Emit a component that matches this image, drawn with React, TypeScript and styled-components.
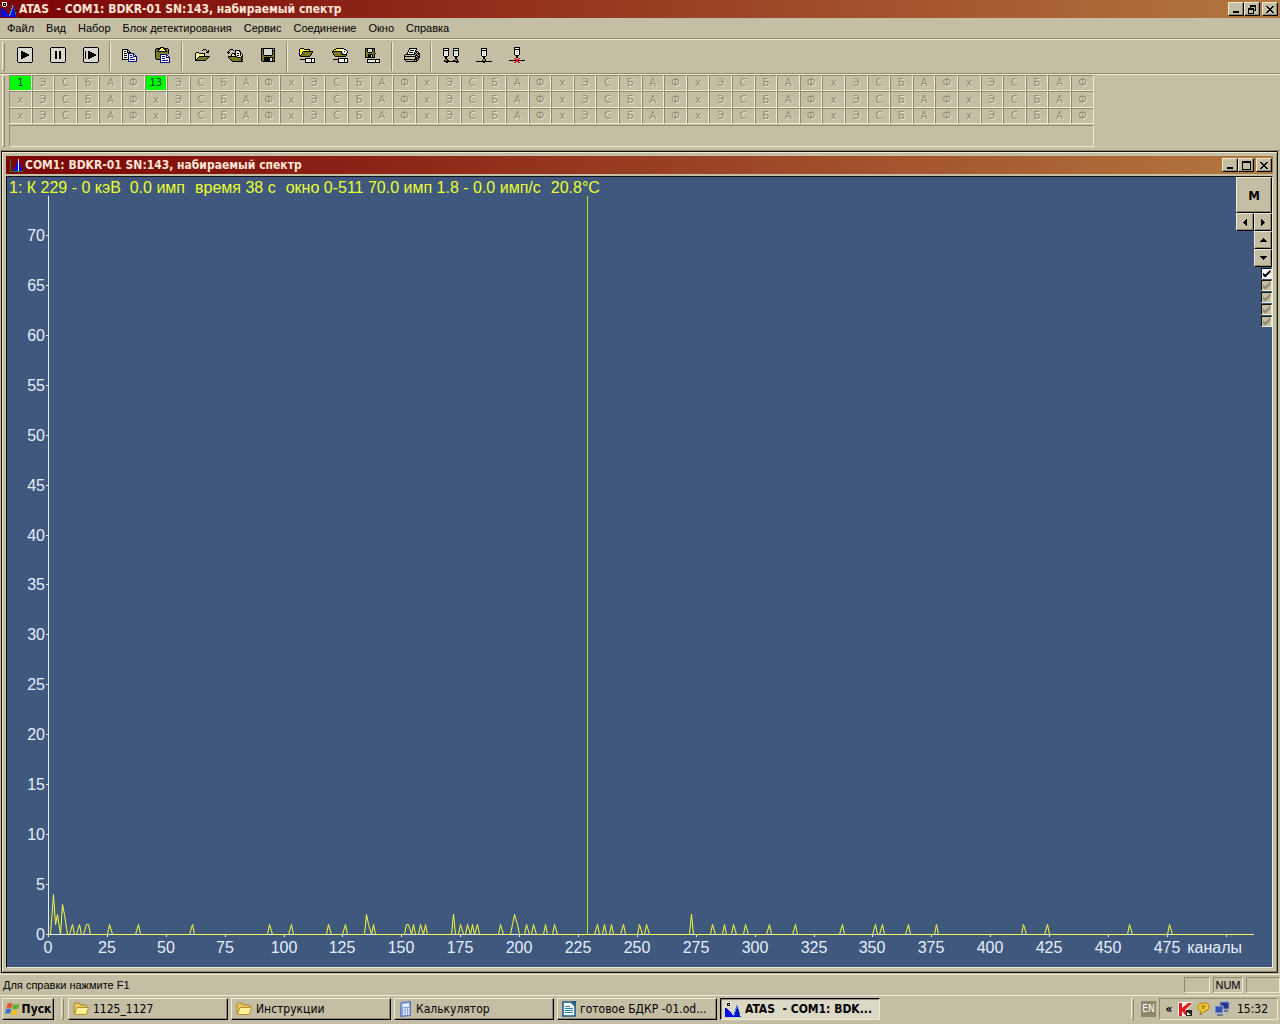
import React, { useLayoutEffect, useRef, useState } from 'react';
import styled, { createGlobalStyle, css } from 'styled-components';

const face = '#c4bea4';
const light = '#efead2';
const shade = '#8f8a6e';
const ui = '"Liberation Sans", Arial, sans-serif';
const tahoma = '"DejaVu Sans Condensed", "DejaVu Sans", sans-serif';

const Global = createGlobalStyle`
  * { box-sizing: border-box; }
  body { margin: 0; background: ${face}; font-family: ${ui}; font-size: 11px; color: #000; }
  button { font: inherit; color: inherit; padding: 0; margin: 0; border: 0; background: none; }
`;

const raised = css`
  background: ${face};
  border: 1px solid;
  border-color: ${light} #000 #000 ${light};
  box-shadow: inset -1px -1px 0 ${shade};
`;
const sunken = css`
  border: 1px solid;
  border-color: ${shade} ${light} ${light} ${shade};
`;

const Desktop = styled.div`
  min-height: 100vh;
  display: flex;
  flex-direction: column;
`;

const TitleBar = styled.header<{ $child?: boolean }>`
  height: 18px;
  flex: none;
  display: flex;
  align-items: center;
  gap: 2px;
  padding: 0 ${p => (p.$child ? '1px 0 4px' : '2px 0 1px')};
  background: linear-gradient(90deg, #7c0306, #b4773f);
  color: #fbe6d6;
`;
const TitleText = styled.h1`
  flex: 1;
  min-width: 0;
  margin: 0;
  font: 700 12px/18px ${tahoma};
  white-space: pre;
  overflow: hidden;
`;
const WindowButtons = styled.div`
  display: flex;
`;
const CaptionButton = styled.button<{ $gap?: boolean }>`
  ${raised}
  width: 16px;
  height: 14px;
  margin-left: ${p => (p.$gap ? 2 : 0)}px;
  display: grid;
  place-items: center;
`;

const MenuBar = styled.nav`
  height: 21px;
  flex: none;
  display: flex;
  align-items: center;
  padding-left: 1px;
  border-bottom: 1px solid ${shade};
`;
const MenuItem = styled.button`
  padding: 0 6px;
  line-height: 18px;
`;

const Band = styled.div<{ $last?: boolean }>`
  flex: none;
  display: flex;
  padding: 2px 0 ${p => (p.$last ? 3 : 2)}px 2px;
  border-top: 1px solid ${light};
  border-bottom: ${p => (p.$last ? 0 : 1)}px solid ${shade};
`;
const Grip = styled.div`
  width: 3px;
  flex: none;
  border: 1px solid;
  border-color: ${light} ${shade} ${shade} ${light};
`;
const Tools = styled.div`
  display: flex;
  height: 29px;
  padding-left: 3px;
`;
const ToolButton = styled.button`
  width: 33px;
  display: grid;
  place-items: center;
  padding-bottom: 3px;
`;
const ToolSeparator = styled.div`
  width: 2px;
  margin: 0 2px;
  border-left: 1px solid ${shade};
  border-right: 1px solid ${light};
`;

const DetectorBand = styled(Band)`
  padding-top: 0;
`;
const Detectors = styled.div`
  width: 1085px;
  margin-left: 4px;
`;
const DetectorTable = styled.table`
  width: 100%;
  table-layout: fixed;
  border-collapse: separate;
  border-spacing: 0 0;
`;
const DetectorRow = styled.tr`
  height: 16px;
  &:nth-child(2) { height: 17px; }
`;
const Cell = styled.td<{ $on: boolean }>`
  ${sunken}
  padding: 0;
  text-align: center;
  font: 11px/14px ${tahoma};
  color: ${p => (p.$on ? '#043' : '#8f8a70')};
  text-shadow: ${p => (p.$on ? 'none' : '1px 1px 0 #e6e1ca')};
  background: ${p => (p.$on ? '#00fb08' : 'transparent')};
`;
const DetectorNote = styled.div`
  ${sunken}
  height: 22px;
  margin-top: 1px;
`;

const Workspace = styled.main`
  flex: 1;
  display: flex;
  padding: 0 2px 1px 1px;
  border-top: 1px solid ${shade};
`;
const ChildWindow = styled.section`
  flex: 1;
  min-width: 0;
  display: flex;
  flex-direction: column;
  padding: 4px;
  border: 1px solid #111;
  box-shadow: inset 1px 1px 0 ${light}, inset -1px -1px 0 ${shade};
`;
const Canvas = styled.div`
  position: relative;
  flex: 1;
  min-height: 300px;
  margin-top: 2px;
  border: 1px solid;
  border-color: #111 ${light} ${light} #111;
  background: #40587e;
  overflow: hidden;
`;
const Readout = styled.div`
  display: flex;
  gap: 10px;
  padding: 1px 2px;
  font: 16px/19px ${ui};
  color: #eaff2e;
  white-space: pre;
`;
const Plot = styled.svg`
  position: absolute;
  inset: 0;
  width: 100%;
  height: 100%;
  font: 16px ${ui};
`;
const Controls = styled.div`
  position: absolute;
  top: 0;
  right: 0;
  width: 36px;
  display: flex;
  flex-direction: column;
  align-items: flex-end;
`;
const ArrowPair = styled.div`
  display: flex;
`;
const ModeButton = styled.button`
  ${raised}
  width: 36px;
  height: 36px;
  font: 700 13px ${tahoma};
`;
const ArrowButton = styled.button`
  ${raised}
  width: 18px;
  height: 18px;
  display: grid;
  place-items: center;
`;
const Checks = styled.div`
  display: flex;
  flex-direction: column;
  gap: 1px;
  margin-top: 1px;
`;
const Check = styled.input`
  appearance: none;
  width: 11px;
  height: 11px;
  margin: 0;
  display: grid;
  place-items: center;
  background: #fff;
  border: 1px solid;
  border-color: #111 ${light} ${light} #111;
  &::before {
    content: '';
    width: 8px;
    height: 8px;
    background: #000;
    clip-path: polygon(0 35%, 35% 62%, 100% 0, 100% 35%, 35% 100%, 0 68%);
  }
  &:disabled { background: ${face}; }
  &:disabled::before { background: ${shade}; }
`;

const StatusBar = styled.footer`
  flex: none;
  height: 21px;
  display: flex;
  align-items: center;
  gap: 3px;
  padding-left: 3px;
  border-top: 1px solid ${light};
`;
const StatusText = styled.span`
  flex: 1;
`;
const StatusField = styled.span<{ $w: number }>`
  ${sunken}
  width: ${p => p.$w}px;
  height: 16px;
  line-height: 14px;
  text-align: center;
`;

const TaskBar = styled.div`
  flex: none;
  height: 29px;
  display: flex;
  align-items: stretch;
  padding: 2px 2px 4px;
  border-top: 1px solid ${light};
  font: 12px ${tahoma};
`;
const StartButton = styled.button`
  ${raised}
  width: 52px;
  margin-right: 7px;
  display: flex;
  align-items: center;
  justify-content: center;
  gap: 2px;
  font-weight: 700;
`;
const Tasks = styled.div`
  flex: 1;
  min-width: 0;
  display: flex;
  gap: 3px;
  margin-left: 4px;
`;
const Task = styled.button<{ $active?: boolean }>`
  ${raised}
  flex: 0 1 160px;
  min-width: 0;
  display: flex;
  align-items: center;
  gap: 4px;
  padding: 0 2px 0 4px;
  overflow: hidden;
  ${p => p.$active && css`
    font-weight: 700;
    background: #dcd8c6;
    border-color: #000 ${light} ${light} #000;
    box-shadow: inset 1px 1px 0 ${shade};
  `}
`;
const TaskLabel = styled.span`
  min-width: 0;
  overflow: hidden;
  white-space: pre;
`;
const Language = styled.span`
  width: 15px;
  height: 16px;
  margin: 3px 3px 0 7px;
  background: #8d886b;
  color: #fff;
  font-size: 10px;
  line-height: 16px;
  text-align: center;
`;
const Tray = styled.div`
  ${sunken}
  width: 119px;
  display: flex;
  align-items: center;
  gap: 4px;
  padding: 0 9px 0 4px;
`;
const Chevron = styled.button`
  font-weight: 700;
  width: 10px;
`;
const Clock = styled.time`
  margin-left: auto;
`;

const palette: Record<string, string> = {
  k: '#000', w: '#f4f4ec', y: '#ffff3a', o: '#7d7a1c', g: '#8c8c80', n: '#101080',
  b: '#0010e0', r: '#e81818', e: '#208030', l: '#d8d8cc', c: '#5a8ad8', p: '#f6f49a',
};

function Bitmap({ rows }: { rows: string[] }) {
  const width = Math.max(...rows.map(r => r.length));
  const dots: React.ReactNode[] = [];
  rows.forEach((row, y) => {
    let x = 0;
    while (x < row.length) {
      let end = x + 1;
      while (end < row.length && row[end] === row[x]) end++;
      const fill = palette[row[x]];
      if (fill) dots.push(<rect key={`${x}-${y}`} x={x} y={y} width={end - x} height={1} fill={fill} />);
      x = end;
    }
  });
  return (
    <svg width={width} height={rows.length} shapeRendering="crispEdges" aria-hidden="true">
      {dots}
    </svg>
  );
}

const box = (inner: string[]) => [
  '.kkkkkkkkkkkkkk.', 'kllllllllllllllk', 'kllllllllllllllk', 'kllllllllllllllk',
  ...inner.map(r => `kl${r.replace(/\./g, 'l')}lk`),
  'kllllllllllllllk', 'kllllllllllllllk', 'kllllllllllllllk', '.kkkkkkkkkkkkkk.',
];

const art: Record<string, string[]> = {
  play: box(['..kk........', '..kkkk......', '..kkkkkk....', '..kkkkkkkk..', '..kkkkkkkk..', '..kkkkkk....', '..kkkk......', '..kk........']),
  pause: box(['...kk..kk...', '...kk..kk...', '...kk..kk...', '...kk..kk...', '...kk..kk...', '...kk..kk...', '...kk..kk...', '...kk..kk...']),
  step: box(['k..kk.......', 'k..kkkk.....', 'k..kkkkkk...', 'k..kkkkkkkk.', 'k..kkkkkkkk.', 'k..kkkkkk...', 'k..kkkk.....', 'k..kk.......']),
  copy: [
    'kkkkkk..........', 'kwwwwkk.........', 'kwkkwkwk........', 'kwwwwkkkk.......', 'kwkkkwnnnnnn....',
    'kwwwwwnwwwwnn...', 'kwkkkwnwnnwnwn..', 'kwwwwwnwwwwnnnn.', 'kwkkkwnwnnnwwwn.', 'kwwwwwnwwwwwwwn.',
    'kkkkkknwnnnnnwn.', '......nwwwwwwwn.', '......nnnnnnnnn.',
  ],
  paste: [
    '.....kkkk.......', '.kkkkkyykkkkk...', 'kookkyyyykkook..', 'kookwwwwwwkook..', 'kokkkkkkkkkkok..',
    'kooooooooooook..', 'kooooooooooook..', 'koooonnnnnnn....', 'koooonwwwwwnn...', 'koooonwnnnwnwn..',
    'koooonwwwwwnnnn.', 'koooonwnnnwwwwn.', '.kkkknwwwwwwwwn.', '.....nwnnnnnnwn.', '.....nwwwwwwwwn.', '.....nnnnnnnnnn.',
  ],
  open: [
    '.........kkk....', '........k...k.k.', '.............kk.', '..kkk.......kkk.',
    '.kpppkkkkkk.....', '.kppppppppk.....', '.kppppppppk.....', '.kpppkkkkkkkkkkk', '.kppkoooooooook.',
    '.kpkoooooooook..', '.kkoooooooook...', '.kkkkkkkkkkk....',
  ],
  reopen: [
    '...kkk..........', '..k...k.kkkkk...', '.k......kwwwkk..', 'kkk.....kwwwwk..', '.k...kkkkwkkwkk.',
    '....kppkkwwwwkpk', '....kpppkwkkwkpk', '.kkkkkkkkkwwwwkk', '.kooooooookkkkok', '..koooooooooooko',
    '...kooooooooookk', '....koooooooooko', '.....kkkkkkkkkkk',
  ],
  save: [
    'kkkkkkkkkkkkkk', 'kokllllllllkwk', 'kokllllllllkkk', 'kokllllllllkok', 'kokllllllllkok', 'kokllllllllkok',
    'kokllllllllkok', 'kookkkkkkkkook', 'kooooooooooook', 'kookkkkkkkkkok', 'kookkkkkkllkok', 'kookkkkkkllkok',
    'kookkkkkkllkok', '.kkkkkkkkkkkkk',
  ],
  openDevice: [
    '.kkkk...........', 'kyyyykkkkkk.....', 'kyyyyyyyyyk.....', 'kyyykkkkkkkkkk..', 'kyykoooooooook..',
    'kyykooooooook...', 'kykoooooooook...', 'kkoooooooook....', '.kkkkkkkkkk.....', '................',
    '......kkkkkkkkkk', '.kkkkkkwwwwwkwwk', '......kwwwwwkwwk', '......kwwwwwkwwk', '......kkkkkkkkkk',
  ],
  reopenDevice: [
    '....kkkkkkkk....', '..kkyyyyywwwkk..', '.kyyyyyywwwwwwk.', 'kkkkkkkkkkwwkwwk', 'kooooooookwwwwwk',
    '.koooooookkwwwk.', '.kooooooookkkkk.', '..koooooooooook.', '...kkkkkkkkkkk..', '................',
    '......kkkkkkkkkk', '.kkkkkkwwwwwkwwk', '......kwwwwwkwwk', '......kwwwwwkwwk', '......kkkkkkkkkk',
  ],
  saveDevice: [
    'kkkkkkkkkk......', 'kokllllkok......', 'kokllllkok......', 'kokllllkok......', 'kookkkkook......',
    'koooooooook.....', 'kookkkkkok......', 'kookkklkok......', 'kookkklkok......', 'kkkkkkkkkk......',
    '................', '..kkkkkkkkkkkkk.', '..kwwwwwwwkwwwk.', '..kwwwwwwwkwwwk.', '..kkkkkkkkkkkkk.',
  ],
  print: [
    '.....kkkkkkkk...', '.....kwwwwwwk...', '....kwkkkkwk....', '....kwwwwwwkkk..', '...kwkkkkwk.k.k.',
    '...kwwwwwwkk.kkk', '.kkkkkkkkkk.k.kk', 'k..........kkk.k', 'kkkkkkkkkkkk.kkk', 'k..........kk.kk',
    'k......yy..kkkk.', 'kkkkkkkkkkkkk.k.', '.k........k.kk..', '..kkkkkkkkkkk...',
  ],
  probes: [
    'kkkkkk....kkkkkk', 'kwwwwk....kwwwwk', 'kkkkkk....kkkkkk', 'kwllwk....kwllwk', 'kwllwk....kwllwk', 'kwllwk....kwllwk',
    'kwllwk....kwllwk', 'kwwwwk....kwwwwk', '.kkkk......kkkk.', '..kk........kk..', '..kk........kk..', '..ook.......ook.',
    '.kookk....kkook.', '.kkkkkkkkkkkkkkk', '...kk........kk.',
  ],
  probe: [
    '.....kkkkkk.....', '.....kwwwwk.....', '.....kkkkkk.....', '.....kwllwk.....', '.....kwllwk.....', '.....kwllwk.....',
    '.....kwllwk.....', '.....kwwwwk.....', '......kkkk......', '.......kk.......', '.......kk.......', '.......ook......',
    '......kook......', 'kkkkkkkkkkkkkkkk', '.......kk.......',
  ],
  probeOff: [
    '.....kkkkkk.....', '.....kwwwwk.....', '.....kkkkkk.....', '.....kwllwk.....', '.....kwllwk.....', '.....kwllwk.....',
    '.....kwllwk.....', '.....kwwwwk.....', '......kkkk......', '.......kk.......', '.......kk.......', '.....rr..rr.....',
    '......rrrr......', 'kkkkkkkrrkkkkkkk', '......rrrr......', '.....rr..rr.....',
  ],
  atas: [
    '.wwwww..........', '.wkkkw..........', '.wkwkw..........', '.wkkkw.....c....', '..www......cc...', '...........cb...',
    'bb........ccb...', 'bbb.......cbbe..', 'bbbb......cbbe..', 'bbbbb....ccbbb..', 'bbbbbb...cbbbbe.', 'bbbbbbb..cbbbbe.',
    'bbbbbbb.ccbbbbe.', 'bbbbbbbbcbbbbbb.', 'bbbbbbbbbbbbbbbe',
  ],
  spectrum: [
    'e.......w....', 'e.......w....', 'e......bw....', 'e......bwb...', 'e......bwb...', 'e.....bbwb...', 'e.....bbwbb..',
    'e.....bbwbb..', 'e....bbbwbb..', 'e....bbbwbbb.', 'e...bbbbwbbb.', 'e...bbbbwbbb.', 'eeeeeeeeeeeee',
  ],
  min: ['.......', '.......', '.......', '.......', '.......', '.......', 'kkkkkk.', 'kkkkkk.'],
  max: ['kkkkkkkkk', 'kkkkkkkkk', 'k.......k', 'k.......k', 'k.......k', 'k.......k', 'k.......k', 'k.......k', 'kkkkkkkkk'],
  restore: ['..kkkkkk', '..kkkkkk', '..k....k', 'kkkkkk.k', 'kkkkkk.k', 'k....kkk', 'k....k..', 'k....k..', 'kkkkkk..'],
  close: ['kk....kk', '.kk..kk.', '..kkkk..', '...kk...', '..kkkk..', '.kk..kk.', 'kk....kk'],
  left: ['...k', '..kk', '.kkk', 'kkkk', '.kkk', '..kk', '...k'],
  right: ['k...', 'kk..', 'kkk.', 'kkkk', 'kkk.', 'kk..', 'k...'],
  up: ['...k...', '..kkk..', '.kkkkk.', 'kkkkkkk'],
  down: ['kkkkkkk', '.kkkkk.', '..kkk..', '...k...'],
};

const FolderIcon = () => (
  <svg width="16" height="14" viewBox="0 0 16 14" aria-hidden="true">
    <path d="M1 12V2l1-1h4l2 2h5l1 1v2" fill="#e8c860" stroke="#a88420" />
    <path d="M1.5 12.5 4 5.5h11.5l-2 7z" fill="#fff09a" stroke="#b8922c" />
  </svg>
);
const CalculatorIcon = () => (
  <svg width="13" height="16" viewBox="0 0 13 16" aria-hidden="true">
    <path d="M2 1.5 11.5.5v14l-10 1z" fill="#8fa8e0" stroke="#5a70b8" />
    <path d="M3.500 3 10 2.500v3L3.500 6z" fill="#e8f2ff" />
    <path d="M4 8h1.500M6.500 8H8M9 8h1.500M4 10.500h1.500M6.500 10.500H8M9 10.500h1.500M4 13h1.500M6.500 13H8M9 13h1.500" stroke="#fff" strokeWidth="1.500" />
  </svg>
);
const WriterIcon = () => (
  <svg width="14" height="16" viewBox="0 0 14 16" aria-hidden="true">
    <path d="M1 1h8l4 4v10H1z" fill="#f4fbff" stroke="#1a5a86" strokeWidth="1.500" />
    <path d="M9 0h5v5z" fill="#1a5a86" />
    <path d="M3 5.500h5M3 7.500h8M3 9.500h8M3 11.500h8" stroke="#2d84b4" />
  </svg>
);
const WindowsLogo = () => (
  <svg width="15" height="14" viewBox="0 0 15 14" aria-hidden="true">
    <path d="M2.500 2Q5 .2 7.500 1.700L6.400 6.300Q4 5 1.400 6.500z" fill="#e8562a" />
    <path d="M8.300 2.100Q11 3.500 14.500 1.800L13.200 6.500Q10 8 7.200 6.700z" fill="#5cb030" />
    <path d="M1.200 7.300Q4 6 6.200 7.200L5.100 11.800Q3 10.500.1 12z" fill="#3a70d8" />
    <path d="M7 7.600Q10 9 13 7.400L11.800 12Q9 13.700 5.900 12.200z" fill="#f4bc20" />
  </svg>
);
const AntivirusIcon = () => (
  <svg width="15" height="15" viewBox="0 0 15 15" aria-hidden="true">
    <path d="M0 0h15L9 7l5 7H0z" fill="#fff4f0" />
    <path d="M1 1h3v5l6-5h4L7 8l3 5H7L4 9v5H1z" fill="#e01c1c" />
    <path d="M8 8h6v6H8z" fill="#222" />
    <path d="M9 13V10l4 3z" fill="#fff" />
  </svg>
);
const BubbleIcon = () => (
  <svg width="13" height="14" viewBox="0 0 13 14" aria-hidden="true">
    <path d="M5 1h4q4 1 3 4 0 3-4 4L3 13l1-4Q0 8 1 4q1-3 4-3z" fill="#f8cc38" stroke="#a87c10" />
    <path d="M4 4h5M4 6h4" stroke="#8a6408" />
  </svg>
);
const NetworkIcon = () => (
  <svg width="16" height="16" viewBox="0 0 16 16" aria-hidden="true">
    <path d="M6 1h9v7H6z" fill="#27358c" stroke="#8d9ad0" />
    <path d="M1 5h8v7H1z" fill="#3550b0" stroke="#a9b4dc" />
    <path d="M3 14h6M10 10h4" stroke="#6d7498" strokeWidth="2" />
  </svg>
);

const singles = [
  10, 13, 16, 17, 26, 38, 61, 94, 103, 119, 126, 138, 152, 153, 155, 158, 160, 175, 178, 180, 182, 192,
  203, 206, 211, 215, 233, 236, 239, 244, 251, 254, 282, 287, 291, 296, 306, 317, 337, 351, 354, 365, 377,
  414, 424, 459, 476,
];
const counts = new Array<number>(512).fill(0);
singles.forEach(ch => { counts[ch] = 1; });
Object.entries({ 2: 4, 3: 1, 4: 2, 6: 3, 7: 2, 135: 2, 136: 1, 172: 2, 197: 1, 198: 2, 199: 1, 273: 2 })
  .forEach(([ch, n]) => { counts[Number(ch)] = n; });

const cursorChannel = 229;
const maxCount = 73.9;

function Spectrum() {
  const ref = useRef<SVGSVGElement>(null);
  const [size, setSize] = useState({ w: 1265, h: 791 });
  useLayoutEffect(() => {
    const el = ref.current;
    if (!el) return;
    const measure = () => {
      const r = el.getBoundingClientRect();
      setSize({ w: r.width, h: r.height });
    };
    measure();
    const observer = new ResizeObserver(measure);
    observer.observe(el);
    return () => observer.disconnect();
  }, []);

  const left = 41;
  const top = 19;
  const right = size.w - 18;
  const base = size.h - 33;
  const px = (ch: number) => Math.round(left + (ch * (right - left)) / 512);
  const py = (n: number) => Math.round(base - (n * (base - top)) / maxCount);
  const line = counts.map((n, ch) => `${px(ch) + 0.5},${py(n) + 0.5}`).join(' ');
  const yTicks = Array.from({ length: 15 }, (_, i) => i * 5);
  const xTicks = Array.from({ length: 21 }, (_, i) => i * 25);

  return (
    <Plot ref={ref} role="img" aria-label="Спектр">
      <g fill="#e4eefa">
        <rect x={left} y={top} width={1} height={base - top + 1} />
        <rect x={left} y={base} width={right - left} height={1} />
        {yTicks.map(n => (
          <g key={n}>
            <rect x={left - 2} y={py(n)} width={2} height={1} />
            <text x={left - 3} y={py(n) + 6} textAnchor="end">{n}</text>
          </g>
        ))}
        {xTicks.map(ch => (
          <g key={ch}>
            <rect x={px(ch)} y={base + 1} width={1} height={2} />
            {ch < 500 && <text x={px(ch)} y={base + 19} textAnchor="middle">{ch}</text>}
          </g>
        ))}
        <text x={right - 12} y={base + 19} textAnchor="end">каналы</text>
      </g>
      <polyline points={line} fill="none" stroke="#f4ff38" strokeWidth={1} />
      <rect x={px(cursorChannel)} y={top} width={1} height={base - top} fill="#9cf01c" />
    </Plot>
  );
}

const menus = ['Файл', 'Вид', 'Набор', 'Блок детектирования', 'Сервис', 'Соединение', 'Окно', 'Справка'];
const toolGroups: [string, string][][] = [
  [['play', 'Пуск'], ['pause', 'Пауза'], ['step', 'Продолжить']],
  [['copy', 'Копировать'], ['paste', 'Вставить']],
  [['open', 'Открыть'], ['reopen', 'Загрузить'], ['save', 'Сохранить']],
  [['openDevice', 'Открыть в блок'], ['reopenDevice', 'Загрузить в блок'], ['saveDevice', 'Сохранить из блока']],
  [['print', 'Печать']],
  [['probes', 'Все блоки'], ['probe', 'Подключить'], ['probeOff', 'Отключить']],
];
const letters = ['х', 'Э', 'С', 'Б', 'А', 'Ф'];
const cellText = (row: number, col: number) => {
  if (row === 0 && col === 0) return '1';
  if (row === 0 && col === 6) return '13';
  return letters[col % 6];
};
const readings = [
  '1: К 229 - 0 кэВ  0.0 имп',
  'время 38 с',
  'окно 0-511 70.0 имп 1.8 - 0.0 имп/с',
  '20.8°C',
];

function Caption({ middle, label }: { middle: string; label: string }) {
  return (
    <WindowButtons>
      <CaptionButton aria-label="Свернуть"><Bitmap rows={art.min} /></CaptionButton>
      <CaptionButton aria-label={label}><Bitmap rows={art[middle]} /></CaptionButton>
      <CaptionButton $gap aria-label="Закрыть"><Bitmap rows={art.close} /></CaptionButton>
    </WindowButtons>
  );
}

export default function App() {
  return (
    <Desktop>
      <Global />
      <TitleBar>
        <Bitmap rows={art.atas} />
        <TitleText>{'ATAS  - COM1: BDKR-01 SN:143, набираемый спектр'}</TitleText>
        <Caption middle="restore" label="Восстановить" />
      </TitleBar>
      <MenuBar>
        {menus.map(m => <MenuItem key={m}>{m}</MenuItem>)}
      </MenuBar>
      <Band>
        <Grip />
        <Tools>
          {toolGroups.map((group, i) => (
            <React.Fragment key={i}>
              {i > 0 && <ToolSeparator />}
              {group.map(([icon, label]) => (
                <ToolButton key={icon} aria-label={label}><Bitmap rows={art[icon]} /></ToolButton>
              ))}
            </React.Fragment>
          ))}
        </Tools>
      </Band>
      <DetectorBand $last>
        <Grip />
        <Detectors>
          <DetectorTable>
            <tbody>
              {[0, 1, 2].map(row => (
                <DetectorRow key={row}>
                  {Array.from({ length: 48 }, (_, col) => (
                    <Cell key={col} $on={row === 0 && (col === 0 || col === 6)}>{cellText(row, col)}</Cell>
                  ))}
                </DetectorRow>
              ))}
            </tbody>
          </DetectorTable>
          <DetectorNote />
        </Detectors>
      </DetectorBand>
      <Workspace>
        <ChildWindow>
          <TitleBar $child>
            <Bitmap rows={art.spectrum} />
            <TitleText as="h2">COM1: BDKR-01 SN:143, набираемый спектр</TitleText>
            <Caption middle="max" label="Развернуть" />
          </TitleBar>
          <Canvas>
            <Spectrum />
            <Readout>{readings.map(r => <span key={r}>{r}</span>)}</Readout>
            <Controls>
              <ModeButton>M</ModeButton>
              <ArrowPair>
                <ArrowButton aria-label="Влево"><Bitmap rows={art.left} /></ArrowButton>
                <ArrowButton aria-label="Вправо"><Bitmap rows={art.right} /></ArrowButton>
              </ArrowPair>
              <ArrowButton aria-label="Вверх"><Bitmap rows={art.up} /></ArrowButton>
              <ArrowButton aria-label="Вниз"><Bitmap rows={art.down} /></ArrowButton>
              <Checks>
                {[1, 2, 3, 4, 5].map(n => (
                  <Check key={n} type="checkbox" defaultChecked disabled={n > 1} aria-label={`Спектр ${n}`} />
                ))}
              </Checks>
            </Controls>
          </Canvas>
        </ChildWindow>
      </Workspace>
      <StatusBar>
        <StatusText>Для справки нажмите F1</StatusText>
        <StatusField $w={26} />
        <StatusField $w={30}>NUM</StatusField>
        <StatusField $w={34} />
      </StatusBar>
      <TaskBar>
        <StartButton><WindowsLogo />Пуск</StartButton>
        <Grip />
        <Tasks>
          <Task><FolderIcon /><TaskLabel>1125_1127</TaskLabel></Task>
          <Task><FolderIcon /><TaskLabel>Инструкции</TaskLabel></Task>
          <Task><CalculatorIcon /><TaskLabel>Калькулятор</TaskLabel></Task>
          <Task><WriterIcon /><TaskLabel>готовое БДКР -01.od...</TaskLabel></Task>
          <Task $active><Bitmap rows={art.atas} /><TaskLabel>{'ATAS  - COM1: BDK...'}</TaskLabel></Task>
        </Tasks>
        <Grip />
        <Language>EN</Language>
        <Tray>
          <Chevron aria-label="Показать значки">«</Chevron>
          <AntivirusIcon />
          <BubbleIcon />
          <NetworkIcon />
          <Clock>15:32</Clock>
        </Tray>
      </TaskBar>
    </Desktop>
  );
}
